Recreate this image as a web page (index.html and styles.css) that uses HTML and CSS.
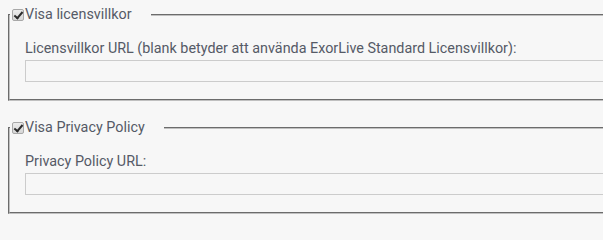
FILE: index.html
```html
<!DOCTYPE html>
<html lang="sv">
<head>
<meta charset="utf-8">
<link rel="stylesheet" href="styles.css">
</head>
<body>
<div class="page">
  <fieldset class="group">
    <legend class="group-legend">
      <label class="legend-label"><input type="checkbox" class="check" checked><span>Visa licensvillkor</span></label>
    </legend>
    <label class="field-label" for="lic">Licensvillkor URL (blank betyder att använda ExorLive Standard Licensvillkor):</label>
    <input id="lic" type="text" class="text-input">
  </fieldset>
  <fieldset class="group">
    <legend class="group-legend">
      <label class="legend-label"><input type="checkbox" class="check" checked><span>Visa Privacy Policy</span></label>
    </legend>
    <label class="field-label" for="pp">Privacy Policy URL:</label>
    <input id="pp" type="text" class="text-input">
  </fieldset>
</div>
</body>
</html>
```

FILE: styles.css
```css
html, body {
  margin: 0;
  padding: 0;
  background: #f7f7f7;
}
body {
  font-family: Roboto, "Liberation Sans", sans-serif;
  font-size: 14.35px;
  color: #555a66;
}
.page {
  padding: 7px 0 0 8px;
  display: flex;
  flex-direction: column;
  gap: 19px;
}
.group {
  margin: 0;
  min-width: 0;
  border: 2px groove #c0c0c0;
  border-right: none;
  padding: 18px 0 17px 15px;
  display: flex;
  flex-direction: column;
}
.group-legend {
  padding: 0 19px 0 2px;
  margin-left: -15px;
  line-height: 16px;
}
.legend-label {
  display: flex;
  align-items: center;
}
.check {
  appearance: none;
  -webkit-appearance: none;
  margin: 0 1px 0 0;
  width: 12px;
  height: 12px;
  border: 1px solid #a8a8a8;
  border-radius: 2px;
  background: linear-gradient(#ececec, #d6d6d6);
  position: relative;
  box-sizing: border-box;
}
.check:checked::after {
  content: "";
  position: absolute;
  left: 3px;
  top: 0px;
  width: 3px;
  height: 7px;
  border-right: 2px solid #2b2b2b;
  border-bottom: 2px solid #2b2b2b;
  transform: rotate(40deg);
}
.field-label {
  line-height: 16px;
  margin-bottom: 3px;
  white-space: nowrap;
}
.text-input {
  margin: 0;
  height: 22px;
  box-sizing: border-box;
  border: 1px solid #cccccc;
  border-right: none;
  background: #f7f7f7;
  width: 100%;
  padding: 0 4px;
  font: inherit;
}
```
